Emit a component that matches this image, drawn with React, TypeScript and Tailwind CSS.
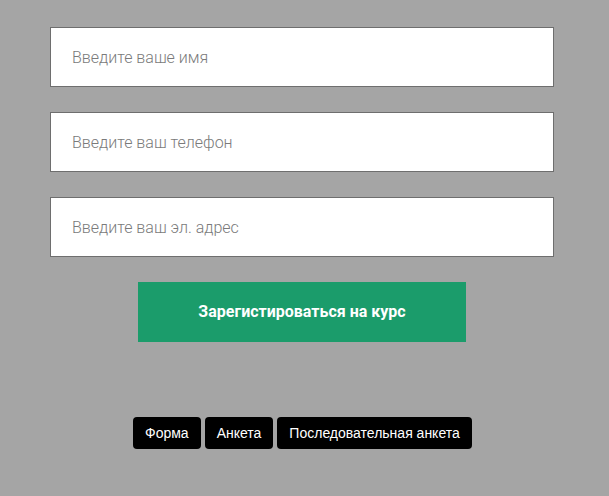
export default function App() {
  const inputCls =
    "w-[504px] h-[60px] bg-white border border-[#6e6e6e] px-[21px] text-[16px] text-[#333] placeholder:text-[#7a7a7a] outline-none font-light";
  const tabCls = "h-[32px] px-[12px] bg-black text-white text-[14px] rounded-[4px]";
  return (
    <div className="w-[609px] h-[496px] bg-[#a5a5a5] flex flex-col items-start" style={{ fontFamily: "Roboto, sans-serif" }}>
      <div className="flex flex-col gap-[25px] mt-[27px] ml-[50px]">
        <input className={inputCls} placeholder="Введите ваше имя" />
        <input className={inputCls} placeholder="Введите ваш телефон" />
        <input className={inputCls} placeholder="Введите ваш эл. адрес" />
      </div>
      <button className="mt-[25px] ml-[138px] w-[328px] h-[60px] bg-[#1b9c6b] text-white font-bold text-[16px]">
        Зарегистироваться на курс
      </button>
      <div className="mt-[75px] ml-[133px] flex gap-[4px]" style={{ fontFamily: "'Liberation Sans', Arial, sans-serif" }}>
        <button className={tabCls}>Форма</button>
        <button className={tabCls}>Анкета</button>
        <button className={tabCls}>Последовательная анкета</button>
      </div>
    </div>
  );
}
